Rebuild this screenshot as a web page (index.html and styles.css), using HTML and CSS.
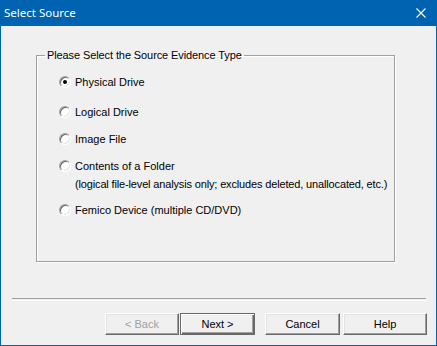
FILE: index.html
```html
<!DOCTYPE html>
<html><head>
  <meta charset="UTF-8">
  <title>Select Source</title>
  <link rel="stylesheet" href="styles.css">
</head><body>
<div id="window">
  <div id="titlebar">
    <span class="title">Select Source</span>
    <svg class="close" width="10" height="10" viewBox="0 0 10 10"><path d="M0.5 0.5L9.5 9.5M9.5 0.5L0.5 9.5" stroke="#fff" stroke-width="1.1" fill="none"/></svg>
  </div>
  <div id="content">
    <fieldset class="group">
      <legend>Please Select the Source Evidence Type</legend>
      <div class="opt first"><span class="radio on"></span>Physical Drive</div>
      <div class="opt second"><span class="radio"></span>Logical Drive</div>
      <div class="opt"><span class="radio"></span>Image File</div>
      <div class="opt"><span class="radio"></span>Contents of a Folder</div>
      <div class="note">(logical file-level analysis only; excludes deleted, unallocated, etc.)</div>
      <div class="opt last"><span class="radio"></span>Femico Device (multiple CD/DVD)</div>
    </fieldset>
    <div class="sep"></div>
    <div class="buttons">
      <button class="btn back" disabled>&lt; Back</button>
      <button class="btn default">Next &gt;</button>
      <button class="btn cancel">Cancel</button>
      <button class="btn help">Help</button>
    </div>
  </div>
</div>
</body>
</html>
```

FILE: styles.css
```css
html,body{
  margin:0;
  height:100%;
}
#window{
  width:437px;
  height:346px;
  box-sizing:border-box;
  border:1px solid #0063b1;
  border-top:none;
  background-color:#f0f0f0;
  display:flex;
  flex-direction:column;
  font-family:"Liberation Sans",Arial,sans-serif;
  font-size:11px;
  color:#000;
}
#titlebar{
  height:26px;
  margin:0 -1px;
  background-color:#0063b1;
  color:#fff;
  display:flex;
  align-items:center;
  justify-content:space-between;
  padding:0 11px 0 4px;
  flex-shrink:0;
}
.title{
  font-family:"Noto Sans","Open Sans",sans-serif;
  font-size:11.5px;
  margin-top:-1px;
}
.close{
  display:block;
  margin-top:-1px;
}
#content{
  flex:1;
  display:flex;
  flex-direction:column;
}
.group{
  box-sizing:border-box;
  width:359px;
  height:213px;
  margin:23px 0 0 35px;
  padding:0 0 0 22px;
  border:1px solid #a0a0a0;
  box-shadow:1px 1px 0 #fff,inset 1px 1px 0 #fff;
}
.group legend{
  margin-left:-14px;
  padding:0 2px;
  line-height:13px;
  letter-spacing:-0.1px;
}
.opt{
  display:flex;
  align-items:center;
  height:14px;
  margin-top:13px;
}
.opt.first{
  margin-top:13px;
}
.opt.second{
  margin-top:16px;
}
.opt.last{
  margin-top:12px;
}
.note{
  padding-left:16px;
  margin-top:4px;
  line-height:14px;
  white-space:nowrap;
  letter-spacing:-0.15px;
}
.radio{
  box-sizing:border-box;
  width:12px;
  height:12px;
  margin-right:4px;
  border-radius:50%;
  background-color:#fff;
  border:1px solid;
  border-color:#a0a0a0 #fff #fff #a0a0a0;
  box-shadow:inset 1px 1px 0 #696969,inset -1px -1px 0 #e3e3e3;
  display:flex;
  align-items:center;
  justify-content:center;
}
.radio.on::after{
  content:"";
  width:4px;
  height:4px;
  border-radius:50%;
  background-color:#000;
}
.sep{
  height:1px;
  margin:36px 10px 0 11px;
  border-top:1px solid #a0a0a0;
  border-bottom:1px solid #fff;
}
.buttons{
  display:flex;
  margin:12px 0 0 104px;
}
.btn{
  box-sizing:border-box;
  height:22px;
  width:75px;
  padding:0;
  font-family:"Liberation Sans",Arial,sans-serif;
  font-size:11px;
  color:#000;
  background-color:#f0f0f0;
  border:1px solid;
  border-color:#fff #696969 #696969 #fff;
  box-shadow:inset -1px -1px 0 #a0a0a0,inset 1px 1px 0 #e3e3e3;
  border-radius:0;
}
.btn.back{
  width:74px;
  color:#a0a0a0;
  margin-right:1px;
}
.btn.default{
  border-color:#696969;
  box-shadow:inset 1px 1px 0 #fff,inset -1px -1px 0 #696969,inset -2px -2px 0 #a0a0a0;
}
.btn.cancel{
  margin-left:10px;
}
.btn.help{
  width:84px;
  margin-left:3px;
}
```
